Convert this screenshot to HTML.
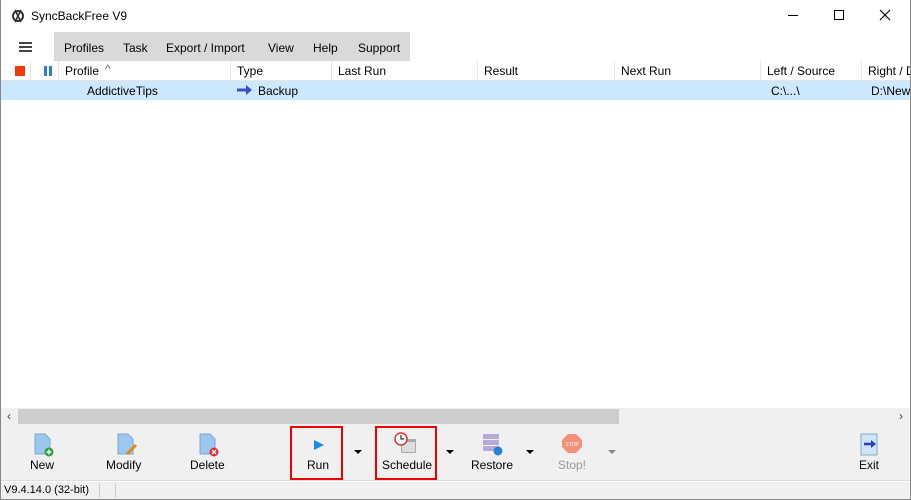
<!DOCTYPE html>
<html><head><style>
*{margin:0;padding:0;box-sizing:border-box}
body{width:911px;height:500px;overflow:hidden;font-family:"Liberation Sans",sans-serif;font-size:12px;color:#000;background:#fff;position:relative;white-space:nowrap}
.abs{position:absolute}
.win{position:absolute;left:0;top:0;width:911px;height:500px;border:1px solid #888;border-top:none}
.hdr span{position:absolute;top:3px}
.sep{position:absolute;top:0;width:1px;height:19px;background:#e5e5e5}
.btn{position:absolute;top:464px;font-size:12px;text-align:center}
.dd{position:absolute;top:450px;width:0;height:0;border-left:4px solid transparent;border-right:4px solid transparent;border-top:4px solid #000}
</style></head><body>
<div class="win"></div>
<svg class="abs" style="left:11px;top:8px" width="14" height="16" viewBox="0 0 14 16"><circle cx="7" cy="8" r="5" fill="none" stroke="#333" stroke-width="2"/><path d="M4 2 L10 14 M10 2 L4 14" stroke="#333" stroke-width="1.6"/></svg>
<div class="abs" style="left:31px;top:9px;font-size:12px">SyncBackFree V9</div>
<div class="abs" style="left:788px;top:15px;width:10px;height:1px;background:#000"></div>
<div class="abs" style="left:834px;top:10px;width:10px;height:10px;border:1px solid #000"></div>
<svg class="abs" style="left:879px;top:9px" width="12" height="12"><path d="M1 1L11 11M11 1L1 11" stroke="#000" stroke-width="1.1"/></svg>
<div class="abs" style="left:54px;top:32px;width:356px;height:29px;background:#d9d9d9"></div>
<div class="abs" style="left:19px;top:42px;width:13px;height:2px;background:#444;box-shadow:0 4px 0 #444,0 8px 0 #444"></div>
<div class="abs" style="top:41px;left:64px">Profiles</div>
<div class="abs" style="top:41px;left:123px">Task</div>
<div class="abs" style="top:41px;left:166px">Export / Import</div>
<div class="abs" style="top:41px;left:268px">View</div>
<div class="abs" style="top:41px;left:313px">Help</div>
<div class="abs" style="top:41px;left:358px">Support</div>
<div class="abs hdr" style="left:1px;top:61px;width:909px;height:20px;border-bottom:1px solid #e5e5e5;overflow:hidden">
<div class="abs" style="left:14px;top:5px;width:10px;height:10px;background:#f53a0a"></div>
<div class="abs" style="left:43px;top:5px;width:3px;height:10px;background:#2b7fd4;box-shadow:5px 0 0 #2b7fd4"></div>
<div class="sep" style="left:29px"></div><div class="sep" style="left:57px"></div>
<span style="left:64px">Profile</span><span style="left:104px;top:1px;color:#666">^</span>
<div class="sep" style="left:229px"></div><span style="left:236px">Type</span>
<div class="sep" style="left:330px"></div><span style="left:337px">Last Run</span>
<div class="sep" style="left:476px"></div><span style="left:483px">Result</span>
<div class="sep" style="left:613px"></div><span style="left:620px">Next Run</span>
<div class="sep" style="left:759px"></div><span style="left:766px">Left / Source</span>
<div class="sep" style="left:860px"></div><span style="left:867px">Right / D</span>
</div>
<div class="abs" style="left:1px;top:81px;width:909px;height:19px;background:#cce8ff"></div>
<div class="abs" style="left:87px;top:84px">AddictiveTips</div>
<svg class="abs" style="left:237px;top:85px" width="16" height="10"><path d="M0 5H10" stroke="#3a4fc9" stroke-width="3"/><path d="M9 0L15 5L9 10Z" fill="#3a4fc9"/></svg>
<div class="abs" style="left:258px;top:84px">Backup</div>
<div class="abs" style="left:771px;top:84px">C:\...\</div>
<div class="abs" style="left:871px;top:84px;width:39px;overflow:hidden">D:\New</div>
<div class="abs" style="left:1px;top:408px;width:909px;height:17px;background:#f0f0f0"></div>
<div class="abs" style="left:18px;top:409px;width:601px;height:15px;background:#cdcdcd"></div>
<div class="abs" style="left:7px;top:409px;font-size:12px;color:#444">‹</div>
<div class="abs" style="left:899px;top:409px;font-size:12px;color:#444">›</div>
<div class="abs" style="left:1px;top:425px;width:909px;height:56px;background:#f0f0f0;border-bottom:1px solid #ddd"></div>
<svg class="abs" style="left:33px;top:433px" width="22" height="24"><path d="M2 1H12L17 6V21H2Z" fill="#9cc8f0" stroke="#7aa7d0"/><circle cx="16" cy="19" r="4.5" fill="#2e9e3e"/><path d="M13.5 19H18.5M16 16.5V21.5" stroke="#fff" stroke-width="1.5"/></svg>
<div class="btn" style="left:30px;top:458px">New</div>
<svg class="abs" style="left:116px;top:433px" width="24" height="24"><path d="M2 1H12L17 6V21H2Z" fill="#9cc8f0" stroke="#7aa7d0"/><path d="M11 21L20 12" stroke="#e08a1a" stroke-width="3"/></svg>
<div class="btn" style="left:106px;top:458px">Modify</div>
<svg class="abs" style="left:198px;top:433px" width="22" height="24"><path d="M2 1H12L17 6V21H2Z" fill="#9cc8f0" stroke="#7aa7d0"/><circle cx="16" cy="19" r="4.5" fill="#e23030"/><path d="M14 17L18 21M18 17L14 21" stroke="#fff" stroke-width="1.3"/></svg>
<div class="btn" style="left:190px;top:458px">Delete</div>
<div class="abs" style="left:290px;top:426px;width:53px;height:54px;border:2px solid #e00"></div>
<svg class="abs" style="left:313px;top:439px" width="12" height="12"><path d="M1 1L11 6L1 11Z" fill="#1e8ae8"/></svg>
<div class="btn" style="left:307px;top:458px">Run</div>
<div class="dd" style="left:354px"></div>
<div class="abs" style="left:375px;top:426px;width:62px;height:54px;border:2px solid #e00"></div>
<svg class="abs" style="left:394px;top:432px" width="24" height="24"><rect x="7" y="7" width="15" height="14" fill="#aaa" rx="1"/><rect x="8" y="10" width="13" height="10" fill="#ddd"/><circle cx="7" cy="7" r="6" fill="#fff" stroke="#d33" stroke-width="1.5"/><path d="M7 3V7H10" stroke="#333" stroke-width="1.2" fill="none"/></svg>
<div class="btn" style="left:382px;top:458px">Schedule</div>
<div class="dd" style="left:446px"></div>
<svg class="abs" style="left:482px;top:433px" width="22" height="24"><rect x="1" y="1" width="16" height="5" fill="#b7a9d8"/><rect x="1" y="7" width="16" height="5" fill="#b7a9d8"/><rect x="1" y="13" width="16" height="5" fill="#b7a9d8"/><circle cx="16" cy="18" r="4.5" fill="#2a7fd6"/></svg>
<div class="btn" style="left:471px;top:458px">Restore</div>
<div class="dd" style="left:526px"></div>
<svg class="abs" style="left:562px;top:433px" width="22" height="22"><path d="M6 1H14L20 7V14L14 20H6L0 14V7Z" fill="#f4907a"/><text x="10" y="13" font-size="5" fill="#fff" text-anchor="middle" font-family="Liberation Sans">STOP</text></svg>
<div class="btn" style="left:558px;top:458px;color:#999">Stop!</div>
<div class="dd" style="left:608px;border-top-color:#888"></div>
<svg class="abs" style="left:860px;top:433px" width="20" height="24"><rect x="1" y="1" width="16" height="21" fill="#cde4fa" stroke="#8ab"/><path d="M4 11H12" stroke="#2a3fbf" stroke-width="2.5"/><path d="M11 7L16 11L11 15Z" fill="#2a3fbf"/></svg>
<div class="btn" style="left:859px;top:458px">Exit</div>
<div class="abs" style="left:1px;top:482px;width:909px;height:17px;background:#f0f0f0"></div>
<div class="abs" style="left:4px;top:484px;font-size:11px">V9.4.14.0 (32-bit)</div>
<div class="abs" style="left:99px;top:483px;width:1px;height:15px;background:#ccc"></div>
<div class="abs" style="left:115px;top:483px;width:1px;height:15px;background:#ccc"></div>
</body></html>
